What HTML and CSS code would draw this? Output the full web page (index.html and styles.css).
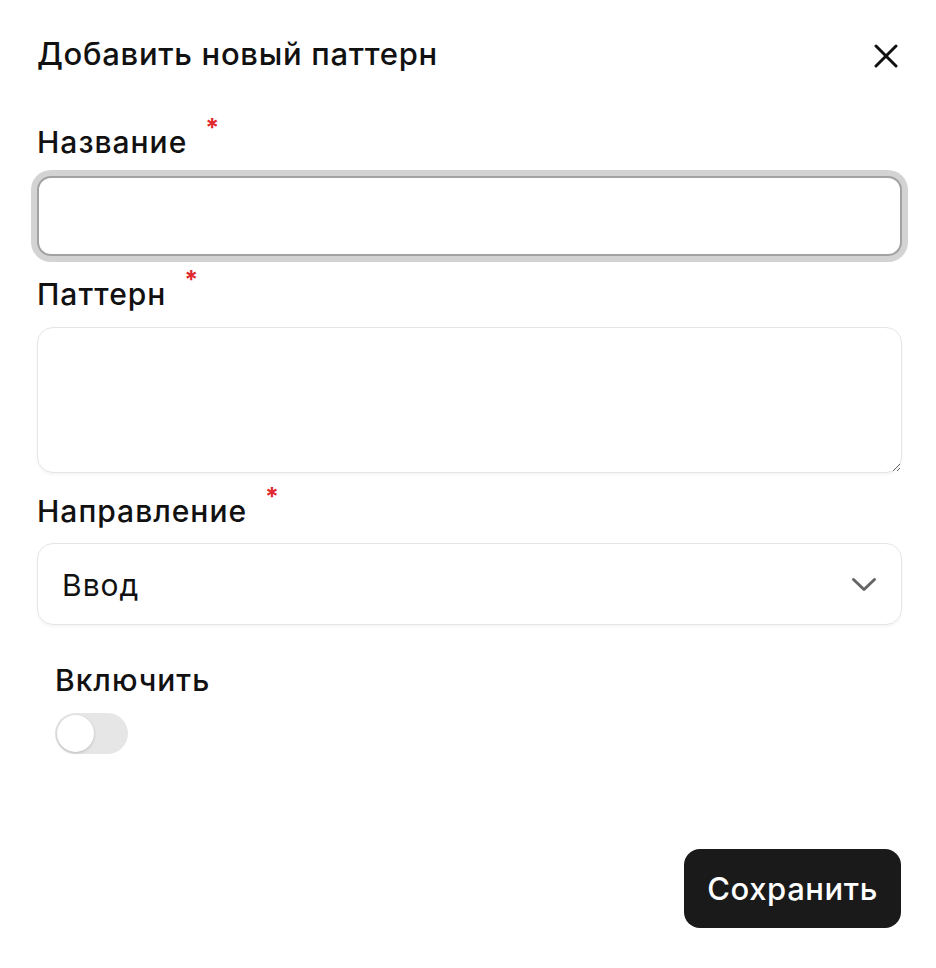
FILE: index.html
```html
<!DOCTYPE html>
<html lang="ru">
<head>
<meta charset="utf-8">
<title>Добавить новый паттерн</title>
<link rel="stylesheet" href="styles.css">
</head>
<body>
<div class="dialog">
  <header class="header">
    <h1 class="title">Добавить новый паттерн</h1>
    <button class="close" aria-label="Закрыть">
      <svg width="24" height="24" viewBox="0 0 24 24"><path d="M2 2 L22 22 M22 2 L2 22" stroke="#111" stroke-width="3" stroke-linecap="round" fill="none"/></svg>
    </button>
  </header>

  <div class="field field-first">
    <label class="label">Название<span class="req">*</span></label>
    <input class="input input-focus" type="text">
  </div>

  <div class="field">
    <label class="label">Паттерн<span class="req">*</span></label>
    <textarea class="textarea"></textarea>
  </div>

  <div class="field">
    <label class="label">Направление<span class="req">*</span></label>
    <div class="select">
      <span class="select-value">Ввод</span>
      <svg class="chevron" width="26" height="16" viewBox="0 0 26 16"><path d="M2.5 2.5 L13 12.5 L23.5 2.5" stroke="#666" stroke-width="3" stroke-linecap="round" stroke-linejoin="round" fill="none"/></svg>
    </div>
  </div>

  <div class="toggle-field">
    <div class="label">Включить</div>
    <div class="toggle"><span class="knob"></span></div>
  </div>

  <div class="footer">
    <button class="save">Сохранить</button>
  </div>
</div>
</body>
</html>
```

FILE: styles.css
```css
* { box-sizing: border-box; }
html, body { margin: 0; padding: 0; background: #fff; }
body {
  font-family: Inter, "Noto Sans", "Liberation Sans", sans-serif;
  color: #111;
}
.dialog {
  width: 936px;
  padding: 36px 34px 0 37px;
}
.header {
  display: flex;
  justify-content: space-between;
  align-items: center;
  height: 36px;
}
.title {
  margin: 0;
  font-size: 31px;
  line-height: 36px;
  font-weight: 500;
  letter-spacing: 0.7px;
}
.close {
  border: 0;
  background: none;
  padding: 0;
  margin-right: 4px;
  margin-top: 4px;
  width: 24px;
  height: 24px;
  display: flex;
}
.field { display: flex; flex-direction: column; margin-top: 20px; }
.field-first { margin-top: 52px; }
.label {
  font-size: 30px;
  line-height: 36px;
  font-weight: 500;
  letter-spacing: 1px;
  color: #111;
}
.req {
  color: #e0282e;
  font-size: 25px;
  font-weight: 700;
  margin-left: 18px;
  vertical-align: 16px;
  line-height: 0;
}
.input {
  margin-top: 16px;
  height: 80px;
  border-radius: 14px;
  font: inherit;
  font-size: 28px;
  padding: 0 24px;
  outline: none;
}
.input-focus {
  border: 2px solid #a2a2a2;
  box-shadow: 0 0 0 6px #d3d3d3;
}
.textarea {
  margin-top: 15px;
  height: 146px;
  border: 1.5px solid #e5e5e5;
  border-radius: 16px;
  box-shadow: 0 2px 3px rgba(0,0,0,0.04);
  resize: vertical;
  font: inherit;
  font-size: 28px;
  padding: 14px 24px;
  outline: none;
}
.select {
  margin-top: 14px;
  height: 82px;
  border: 1.5px solid #e5e5e5;
  border-radius: 16px;
  box-shadow: 0 2px 3px rgba(0,0,0,0.04);
  display: flex;
  align-items: center;
  justify-content: space-between;
  padding: 0 24px 0 24px;
}
.select-value {
  font-size: 30px;
  font-weight: 400;
  letter-spacing: 1px;
  color: #111;
  padding-top: 2px;
}
.chevron { margin-top: 1px; }
.toggle-field {
  margin-top: 37px;
  padding-left: 18px;
  display: flex;
  flex-direction: column;
  align-items: flex-start;
}
.toggle {
  margin-top: 15px;
  width: 73px;
  height: 41px;
  border-radius: 21px;
  background: #e6e6e6;
  padding: 2px;
  display: flex;
}
.knob {
  width: 37px;
  height: 37px;
  border-radius: 50%;
  background: #fff;
  box-shadow: 0 1px 3px rgba(0,0,0,0.2);
}
.footer {
  display: flex;
  justify-content: flex-end;
  margin-top: 95px;
  padding-right: 1px;
}
.save {
  height: 79px;
  padding: 0 23px;
  border: 0;
  border-radius: 16px;
  background: #1a1a1a;
  color: #fff;
  font-family: inherit;
  font-size: 31px;
  font-weight: 500;
  letter-spacing: 0.6px;
}
```
